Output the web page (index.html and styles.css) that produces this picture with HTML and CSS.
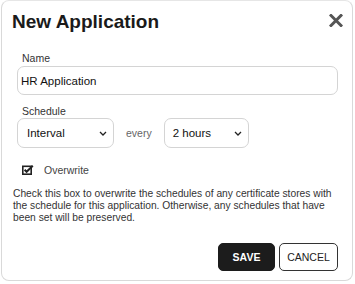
FILE: index.html
```html
<!DOCTYPE html>
<html lang="en">
<head>
  <meta charset="UTF-8">
  <meta name="viewport" content="width=device-width, initial-scale=1.0">
  <title>New Application</title>

  <link rel="stylesheet" href="styles.css">
</head>
<body>
  <div class="dialog">
    <div class="dialog-header">
      <h1 class="dialog-title">New Application</h1>
      <button class="close" type="button" aria-label="Close">
        <svg width="14" height="13" viewBox="0 0 14 13">
          <path d="M2 1.5 L12 11.5 M12 1.5 L2 11.5" stroke="#555" stroke-width="3" stroke-linecap="square"/>
        </svg>
      </button>
    </div>

    <div class="field">
      <label class="label">Name</label>
      <input class="input" type="text" value="HR Application">
    </div>

    <div class="field">
      <label class="label label-schedule">Schedule</label>
      <div class="schedule-row">
        <div class="select select-type">
          <span>Interval</span>
          <svg width="8" height="5" viewBox="0 0 8 5"><path d="M1 1 L4 4 L7 1" fill="none" stroke="#222" stroke-width="1.3"/></svg>
        </div>
        <span class="every">every</span>
        <div class="select select-interval">
          <span>2 hours</span>
          <svg width="8" height="5" viewBox="0 0 8 5"><path d="M1 1 L4 4 L7 1" fill="none" stroke="#222" stroke-width="1.3"/></svg>
        </div>
      </div>
    </div>

    <div class="check-row">
      <svg class="check-icon" width="12" height="10" viewBox="0 0 12 10">
        <rect x="0.8" y="1.3" width="8.4" height="7.9" fill="none" stroke="#222" stroke-width="1.6"/>
        <path d="M2.6 4.8 L4.6 6.8 L10.8 0.8" fill="none" stroke="#222" stroke-width="2"/>
      </svg>
      <span class="check-label">Overwrite</span>
    </div>

    <p class="help">Check this box to overwrite the schedules of any certificate stores with the schedule for this application. Otherwise, any schedules that have been set will be preserved.</p>

    <div class="actions">
      <button class="btn btn-save" type="button">SAVE</button>
      <button class="btn btn-cancel" type="button">CANCEL</button>
    </div>
  </div>
</body>
</html>
```

FILE: styles.css
```css
body {
  margin: 0;
  background: #fff;
  font-family: "Liberation Sans", Arial, sans-serif;
  color: #222;
}

.dialog {
  box-sizing: border-box;
  width: 352px;
  height: 281px;
  margin-left: 1px;
  border: 1px solid #d9d9d9;
  border-top-color: #e6e6e6;
  border-radius: 8px;
  padding: 0 14px 0 10px;
  display: flex;
  flex-direction: column;
}

.dialog-header {
  display: flex;
  align-items: center;
  justify-content: space-between;
  height: 40px;
  padding-top: 1px;
}

.dialog-title {
  margin: 0;
  font-size: 19px;
  font-weight: bold;
  color: #1a1a1a;
}

.close {
  border: 0;
  padding: 0;
  background: none;
  display: flex;
  margin-right: -5px;
  margin-top: -4px;
}

.field {
  margin-left: 5px;
}

.label {
  display: block;
  font-size: 10.5px;
  color: #333;
  margin-top: 10px;
  margin-left: 5px;
  margin-bottom: 2px;
}

.label-schedule {
  margin-top: 10px;
  margin-bottom: 1px;
}

.input {
  box-sizing: border-box;
  width: 321px;
  height: 29px;
  border: 1px solid #d4d4d4;
  border-radius: 7px;
  padding: 0 3px;
  font-family: inherit;
  font-size: 11.5px;
  color: #111;
  outline: none;
}

.schedule-row {
  display: flex;
  align-items: center;
}

.select {
  box-sizing: border-box;
  height: 30px;
  border: 1px solid #d4d4d4;
  border-radius: 7px;
  display: flex;
  align-items: center;
  justify-content: space-between;
  font-size: 11.5px;
  color: #111;
}

.select-type {
  width: 97px;
  padding: 0 6px 0 9px;
}

.select-interval {
  width: 85px;
  padding: 0 6px 0 8px;
}

.every {
  font-size: 10.5px;
  color: #666;
  margin: 0 12px;
}

.check-row {
  display: flex;
  align-items: center;
  margin: 16px 0 0 10px;
}

.check-icon {
  margin-right: 10px;
}

.check-label {
  font-size: 10.5px;
  color: #444;
}

.help {
  margin: 12px 0 0 1px;
  font-size: 10.25px;
  line-height: 12px;
  color: #333;
}

.actions {
  display: flex;
  justify-content: flex-end;
  gap: 4px;
  margin-top: 19px;
}

.btn {
  box-sizing: border-box;
  height: 28px;
  border-radius: 5px;
  font-family: inherit;
  font-size: 10.5px;
  padding: 0;
}

.btn-save {
  width: 57px;
  background: #1c1c1c;
  border: 1px solid #1c1c1c;
  color: #fff;
  font-weight: bold;
}

.btn-cancel {
  width: 59px;
  background: #fff;
  border: 1px solid #333;
  color: #222;
}
```
